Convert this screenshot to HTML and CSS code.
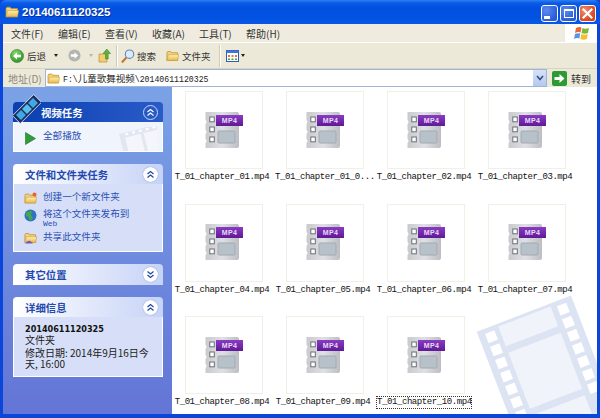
FILE: index.html
```html
<!DOCTYPE html>
<html lang="zh">
<head>
<meta charset="utf-8">
<title>20140611120325</title>
<link rel="stylesheet" href="styles.css">
</head>
<body>
<svg class="defs" width="0" height="0">
  <defs>
    <linearGradient id="fold" x1="0" y1="0" x2="0" y2="1"><stop offset="0" stop-color="#FFF0B0"/><stop offset="1" stop-color="#E8B84E"/></linearGradient>
    <linearGradient id="metal" x1="0" y1="0" x2="1" y2="0"><stop offset="0" stop-color="#C8CACE"/><stop offset=".5" stop-color="#DEE0E3"/><stop offset="1" stop-color="#BCBEC3"/></linearGradient>
    <linearGradient id="purple" x1="0" y1="0" x2="0" y2="1"><stop offset="0" stop-color="#8A3BC4"/><stop offset="1" stop-color="#5F1A96"/></linearGradient>
    <radialGradient id="green" cx=".4" cy=".3" r=".8"><stop offset="0" stop-color="#8EDB6C"/><stop offset="1" stop-color="#1E8A1E"/></radialGradient>
    <symbol id="folder" viewBox="0 0 14 12">
      <path d="M1 2.500 L1.800 1.200 H5.200 L6.200 2.500 H12.500 V10.800 H1 Z" fill="#F6D27A" stroke="#B98E32" stroke-width=".8"/>
      <path d="M1 10.800 L2.600 4.600 H13.600 L12.500 10.800 Z" fill="url(#fold)" stroke="#C79C3E" stroke-width=".6"/>
    </symbol>
    <symbol id="mp4" viewBox="0 0 38 38">
      <path d="M0.500 1 H32 Q34 1 34 3 V35 Q34 37 32 37 H0.500 V32 Q2.500 30 0.500 28 V23 Q2.500 21 0.500 19 V13 Q2.500 11 0.500 9 Z" fill="url(#metal)"/>
      <rect x="4.800" y="6" width="4.500" height="4.800" fill="#fff" stroke="#6C6F76" stroke-width="1"/>
      <rect x="4.800" y="16" width="4.500" height="4.800" fill="#fff" stroke="#6C6F76" stroke-width="1"/>
      <rect x="4.800" y="26" width="4.500" height="4.800" fill="#fff" stroke="#6C6F76" stroke-width="1"/>
      <rect x="13" y="20" width="17" height="12" rx="1" fill="#B7C1CA" stroke="#A4AAB1"/>
      <rect x="11" y="4" width="27" height="11" fill="url(#purple)"/>
      <text x="24.500" y="12" class="mp4-label">MP4</text>
    </symbol>
  </defs>
</svg>
<div class="window">
  <header class="titlebar">
    <svg class="title-icon" width="14" height="12"><use href="#folder"/></svg>
    <span class="title-text">20140611120325</span>
    <div class="caption">
      <span class="cap cap-min"><i class="min-glyph"></i></span>
      <span class="cap cap-max"><i class="max-glyph"></i></span>
      <span class="cap cap-close">
        <svg width="13" height="13" viewBox="0 0 13 13"><path d="M2.500 2.500 L10.500 10.500 M10.500 2.500 L2.500 10.500" stroke="#fff" stroke-width="2.200" stroke-linecap="square"/></svg>
      </span>
    </div>
  </header>
  <div class="frame">
    <nav class="menubar">
      <div class="menus">
        <span>文件(F)</span><span>编辑(E)</span><span>查看(V)</span><span>收藏(A)</span><span>工具(T)</span><span>帮助(H)</span>
      </div>
      <div class="logo">
        <svg width="16" height="15" viewBox="0 0 16 15">
          <path d="M2 2 Q5 0.500 7.500 1.500 L6.500 6.500 Q4 5.500 1 7 Z" fill="#E8683A"/>
          <path d="M8.500 2 Q11.500 3.500 15 2 L14 7 Q10.500 8.500 7.500 7 Z" fill="#7DB83C"/>
          <path d="M1 8 Q3.500 6.700 6.300 7.500 L5.300 12.500 Q2.700 11.500 0 13 Z" fill="#5A94E0"/>
          <path d="M7.300 8 Q10.500 9.500 13.800 8 L12.800 13 Q9.500 14.500 6.300 13 Z" fill="#F5BE2E"/>
        </svg>
      </div>
    </nav>
    <div class="toolbar">
      <div class="tb-group tb-back">
        <svg width="14" height="14" viewBox="0 0 14 14"><circle cx="7" cy="7" r="6.500" fill="url(#green)" stroke="#2C7D2C" stroke-width=".6"/><path d="M3 7 L7 3.500 V5.700 H11 V8.300 H7 V10.500 Z" fill="#fff"/></svg>
        <span class="tb-label">后退</span>
        <i class="drop drop-back"></i>
      </div>
      <svg class="tb-forward" width="13" height="13" viewBox="0 0 14 14"><circle cx="7" cy="7" r="6.500" fill="#B4B4B0"/><path d="M11 7 L7 3.500 V5.700 H3 V8.300 H7 V10.500 Z" fill="#fff"/></svg>
      <i class="drop drop-faint"></i>
      <svg class="tb-up" width="13" height="15" viewBox="0 0 13 15"><path d="M1 6 H9 V14 H1 Z" fill="#F3CF6F" stroke="#B98E32" stroke-width=".7"/><path d="M7.500 11 V5.500 H5 L8.800 1 L12.500 5.500 H10.200 V11 Z" fill="#5FB338" stroke="#2F7D20" stroke-width=".5"/></svg>
      <i class="tb-sep tb-sep-a"></i>
      <svg class="tb-search" width="14" height="14" viewBox="0 0 14 14"><path d="M5 9 L1.500 12.800" stroke="#C9772E" stroke-width="2.200" stroke-linecap="round"/><circle cx="8.500" cy="5.200" r="4.200" fill="#DCEBFA" stroke="#5B86BE" stroke-width="1.100"/></svg>
      <span class="tb-label tb-search-label">搜索</span>
      <svg class="tb-folder" width="13" height="12"><use href="#folder"/></svg>
      <span class="tb-label">文件夹</span>
      <i class="tb-sep tb-sep-b"></i>
      <svg class="tb-view" width="13" height="12" viewBox="0 0 13 12"><rect x=".5" y=".5" width="12" height="11" fill="#fff" stroke="#2E5FB8"/><rect x=".5" y=".5" width="12" height="2.500" fill="#3F78D8"/><path d="M2 5 H4 V7 H2 Z M5.500 5 H7.500 V7 H5.500 Z M9 5 H11 V7 H9 Z" fill="#E27B3A"/><path d="M2 8.500 H4 V10 H2 Z M5.500 8.500 H7.500 V10 H5.500 Z M9 8.500 H11 V10 H9 Z" fill="#4F9E44"/></svg>
      <i class="drop drop-view"></i>
    </div>
    <div class="addressbar">
      <span class="addr-label">地址(D)</span>
      <div class="addr-input">
        <svg width="13" height="11"><use href="#folder"/></svg>
        <span class="addr-path"><span class="mono">F:\</span>儿童歌舞视频<span class="mono">\20140611120325</span></span>
        <span class="addr-drop">
          <svg width="8" height="6" viewBox="0 0 8 6"><path d="M1 1 L4 4.500 L7 1" fill="none" stroke="#3A4F80" stroke-width="1.600"/></svg>
        </span>
      </div>
      <svg class="go-icon" width="15" height="15" viewBox="0 0 15 15"><rect width="15" height="15" rx="2" fill="#2E9A34"/><path d="M2.500 6 H7.500 V3 L12.500 7.500 L7.500 12 V9 H2.500 Z" fill="#fff"/></svg>
      <span class="go-label">转到</span>
    </div>
    <div class="main">
      <aside class="sidebar">
        <section class="panel panel-primary">
          <svg class="film-badge" width="28" height="30" viewBox="0 0 28 30">
            <g transform="rotate(-45 14 15)"><rect x="-1" y="9.500" width="30" height="11" fill="#1E2E5C" stroke="#E8F0FF" stroke-width=".8"/><rect x="2" y="11.500" width="7" height="7" fill="#3FA9E8"/><rect x="10.500" y="11.500" width="7" height="7" fill="#55C0F0"/><rect x="19" y="11.500" width="7" height="7" fill="#3FA9E8"/></g>
          </svg>
          <div class="panel-head head-primary">
            <span class="head-title">视频任务</span>
            <span class="chev chev-primary">
              <svg width="9" height="9" viewBox="0 0 9 9"><path d="M1.500 4 L4.500 1.500 L7.500 4 M1.500 7.500 L4.500 5 L7.500 7.500" fill="none" stroke="#fff" stroke-width="1.200"/></svg>
            </span>
          </div>
          <div class="panel-body body-video">
            <svg class="body-film" width="40" height="26" viewBox="0 0 40 26">
              <g transform="translate(2 7) rotate(-14)">
                <rect width="44" height="30" fill="#E2E6F2"/>
                <rect x="5" y="5" width="16" height="26" fill="#F4F6FB"/>
                <rect x="24" y="5" width="16" height="26" fill="#F4F6FB"/>
                <path d="M6 1 h3 v2 h-3 Z M13 1 h3 v2 h-3 Z M20 1 h3 v2 h-3 Z M27 1 h3 v2 h-3 Z M34 1 h3 v2 h-3 Z" fill="#fff"/>
              </g>
            </svg>
            <div class="task">
              <svg width="11" height="13" viewBox="0 0 11 13"><path d="M.5 .5 L10.500 6.500 L.5 12.500 Z" fill="#2F9C3A" stroke="#1C6E28" stroke-width=".6"/></svg>
              <a>全部播放</a>
            </div>
          </div>
        </section>
        <section class="panel">
          <div class="panel-head">
            <span class="head-title">文件和文件夹任务</span>
            <span class="chev">
              <svg width="9" height="9" viewBox="0 0 9 9"><path d="M1.500 4 L4.500 1.500 L7.500 4 M1.500 7.500 L4.500 5 L7.500 7.500" fill="none" stroke="#2146A8" stroke-width="1.200"/></svg>
            </span>
          </div>
          <div class="panel-body body-tasks">
            <div class="task-line">
              <svg width="13" height="13" viewBox="0 0 13 13"><use href="#folder"/><circle cx="10.500" cy="2.500" r="2" fill="#E9622B"/></svg>
              <a>创建一个新文件夹</a>
            </div>
            <div class="task-line task-wrap">
              <svg width="13" height="13" viewBox="0 0 13 13"><circle cx="6.500" cy="6.500" r="6" fill="#2F72C8"/><path d="M2 4 Q5 1 8 2.500 L7 6 L9 9 L6 12 L4.500 8 L2 7 Z" fill="#42A848"/></svg>
              <a>将这个文件夹发布到<br><span class="latin">Web</span></a>
            </div>
            <div class="task-line">
              <svg width="13" height="12" viewBox="0 0 13 12"><use href="#folder"/><path d="M1 11.500 Q4 7.500 7 9.500 L9 11.500 Z" fill="#7A5AA8"/></svg>
              <a>共享此文件夹</a>
            </div>
          </div>
        </section>
        <section class="panel">
          <div class="panel-head head-closed">
            <span class="head-title">其它位置</span>
            <span class="chev">
              <svg width="9" height="9" viewBox="0 0 9 9"><path d="M1.500 1.500 L4.500 4 L7.500 1.500 M1.500 5 L4.500 7.500 L7.500 5" fill="none" stroke="#2146A8" stroke-width="1.200"/></svg>
            </span>
          </div>
        </section>
        <section class="panel">
          <div class="panel-head">
            <span class="head-title">详细信息</span>
            <span class="chev">
              <svg width="9" height="9" viewBox="0 0 9 9"><path d="M1.500 4 L4.500 1.500 L7.500 4 M1.500 7.500 L4.500 5 L7.500 7.500" fill="none" stroke="#2146A8" stroke-width="1.200"/></svg>
            </span>
          </div>
          <div class="panel-body body-details">
            <div class="detail-name">20140611120325</div>
            <div>文件夹</div>
            <div class="detail-date">修改日期: 2014年9月16日今天, 16:00</div>
          </div>
        </section>
      </aside>
      <div class="content">
        <svg class="watermark" width="125" height="120" viewBox="0 0 125 120">
          <g transform="translate(4.700 37.700) rotate(-21)">
            <rect x="0" y="0" width="101" height="190" fill="#DCE3F2"/>
            <g fill="#F0F3FA">
              <rect x="22" y="3" width="56" height="21"/><rect x="22" y="31" width="56" height="60"/><rect x="22" y="98" width="56" height="60"/>
            </g>
            <g fill="#fff">
              <rect x="7" y="5" width="10" height="10"/><rect x="7" y="19" width="10" height="10"/><rect x="7" y="33" width="10" height="10"/><rect x="7" y="47" width="10" height="10"/><rect x="7" y="61" width="10" height="10"/><rect x="7" y="75" width="10" height="10"/><rect x="7" y="89" width="10" height="10"/>
              <rect x="84" y="5" width="10" height="10"/><rect x="84" y="19" width="10" height="10"/><rect x="84" y="33" width="10" height="10"/><rect x="84" y="47" width="10" height="10"/><rect x="84" y="61" width="10" height="10"/><rect x="84" y="75" width="10" height="10"/><rect x="84" y="89" width="10" height="10"/>
            </g>
          </g>
        </svg>
        <div class="grid">
          <figure class="item"><div class="thumb"><svg width="38" height="38"><use href="#mp4"/></svg></div><figcaption>T_01_chapter_01.mp4</figcaption></figure>
          <figure class="item"><div class="thumb"><svg width="38" height="38"><use href="#mp4"/></svg></div><figcaption>T_01_chapter_01_0...</figcaption></figure>
          <figure class="item"><div class="thumb"><svg width="38" height="38"><use href="#mp4"/></svg></div><figcaption>T_01_chapter_02.mp4</figcaption></figure>
          <figure class="item"><div class="thumb"><svg width="38" height="38"><use href="#mp4"/></svg></div><figcaption>T_01_chapter_03.mp4</figcaption></figure>
          <figure class="item"><div class="thumb"><svg width="38" height="38"><use href="#mp4"/></svg></div><figcaption>T_01_chapter_04.mp4</figcaption></figure>
          <figure class="item"><div class="thumb"><svg width="38" height="38"><use href="#mp4"/></svg></div><figcaption>T_01_chapter_05.mp4</figcaption></figure>
          <figure class="item"><div class="thumb"><svg width="38" height="38"><use href="#mp4"/></svg></div><figcaption>T_01_chapter_06.mp4</figcaption></figure>
          <figure class="item"><div class="thumb"><svg width="38" height="38"><use href="#mp4"/></svg></div><figcaption>T_01_chapter_07.mp4</figcaption></figure>
          <figure class="item"><div class="thumb"><svg width="38" height="38"><use href="#mp4"/></svg></div><figcaption>T_01_chapter_08.mp4</figcaption></figure>
          <figure class="item"><div class="thumb"><svg width="38" height="38"><use href="#mp4"/></svg></div><figcaption>T_01_chapter_09.mp4</figcaption></figure>
          <figure class="item"><div class="thumb"><svg width="38" height="38"><use href="#mp4"/></svg></div><figcaption class="focused">T_01_chapter_10.mp4</figcaption></figure>
        </div>
      </div>
    </div>
  </div>
</div>
</body>
</html>
```
FILE: styles.css
```css
* { box-sizing: border-box; }
html, body { margin: 0; padding: 0; width: 600px; height: 418px; overflow: hidden; }
body { font-family: "Noto Sans CJK SC", "Liberation Sans", sans-serif; font-size: 10px; color: #222; background: #0A3ED0; }
.defs { position: absolute; }
.mp4-label { font: bold 7px "Liberation Sans", sans-serif; letter-spacing: .3px; fill: #E9DCF5; text-anchor: middle; }
.mono { font: 8.200px "Liberation Mono", monospace; }

.window { width: 600px; height: 418px; display: flex; flex-direction: column; background: #0B46DA; }
.titlebar {
  height: 24px; flex: none; display: flex; align-items: center; padding: 0 4px 0 5px;
  background: linear-gradient(#2F7FF0 0, #0A5CE8 3px, #0250DE 8px, #0353E3 18px, #0A58E4 24px);
  border-radius: 6px 6px 0 0;
}
.title-icon { flex: none; }
.title-text { margin-left: 3px; font: bold 11.500px "Liberation Sans", sans-serif; color: #fff; text-shadow: 1px 1px 0 #0A2E9C; }
.caption { margin-left: auto; display: flex; gap: 2px; margin-top: 3px; }
.cap { width: 17px; height: 17px; border: 1px solid #fff; border-radius: 3px; display: flex; align-items: center; justify-content: center; background: radial-gradient(circle at 30% 30%, #5C8CF0, #2A5BD8 75%); }
.cap-close { background: radial-gradient(circle at 30% 30%, #F08A6A, #D8431E 75%); }
.min-glyph { width: 6px; height: 3px; background: #fff; margin: 8px 5px 0 0; }
.max-glyph { width: 10px; height: 9px; border: 1px solid #fff; border-top-width: 2px; }

.frame { flex: 1; min-height: 0; margin: 0 3px 4px; display: flex; flex-direction: column; background: #ECE9D8; }
.menubar { height: 19px; flex: none; display: flex; justify-content: space-between; background: #EFECDF; border-bottom: 1px solid #fff; }
.menus { display: flex; gap: 14px; padding: 1px 0 0 8px; line-height: 17px; color: #333; }
.menus span { width: 33px; white-space: nowrap; }
.logo { width: 32px; height: 19px; background: #fff; display: flex; align-items: center; justify-content: center; padding-left: 1px; }

.toolbar { height: 26px; flex: none; display: flex; align-items: center; padding: 0 0 0 7px; background: #EDE9D9; border-bottom: 1px solid #D8D4C2; }
.tb-group { display: flex; align-items: center; }
.tb-label { color: #333; white-space: nowrap; font-size: 9.500px; }
.tb-back .tb-label { margin-left: 3px; }
.drop { width: 0; height: 0; border-left: 2.500px solid transparent; border-right: 2.500px solid transparent; border-top: 3px solid #222; }
.drop-back { margin-left: 8px; }
.tb-forward { margin-left: 10px; }
.drop-faint { margin-left: 8px; border-top-color: #B8B6AA; }
.tb-up { margin-left: 5px; }
.tb-sep { width: 1px; height: 22px; background: #CFCBB8; box-shadow: 1px 0 0 #fff; }
.tb-sep-a { margin-left: 5px; }
.tb-search { margin-left: 4px; }
.tb-search-label { margin-left: 2px; }
.tb-folder { margin: 0 3px 0 10px; }
.tb-sep-b { margin-left: 8px; }
.tb-view { margin-left: 6px; }
.drop-view { margin-left: 2px; }

.addressbar { height: 18px; flex: none; display: flex; align-items: center; background: #EDE9D9; }
.addr-label { margin-left: 5px; width: 37px; color: #8A887C; white-space: nowrap; }
.addr-input { width: 502px; height: 18px; display: flex; align-items: center; background: #fff; border: 1px solid #9FB4D8; padding-left: 1px; }
.addr-path { margin-left: 3px; font-size: 9.500px; color: #222; white-space: nowrap; }
.addr-drop { margin-left: auto; width: 13px; height: 16px; background: linear-gradient(#D6E2F8, #B4C8EE); display: flex; align-items: center; justify-content: center; }
.go-icon { margin-left: 5px; flex: none; }
.go-label { margin-left: 4px; color: #333; white-space: nowrap; }

.main { flex: 1; min-height: 0; display: flex; }
.sidebar { width: 169px; flex: none; padding: 15px 9px 0 10px; display: flex; flex-direction: column; gap: 12px; background: linear-gradient(#7BA2E7, #6375D6); }
.panel { position: relative; }
.film-badge { position: absolute; left: 0; top: -8px; z-index: 1; }
.panel-head { height: 20px; display: flex; align-items: center; justify-content: space-between; padding: 0 5px 0 12px; border-radius: 4px 4px 0 0; background: linear-gradient(90deg, #fff, #C6D3F7); }
.head-closed { height: 21px; }
.head-title { font-weight: 700; color: #2349AE; font-size: 10.400px; white-space: nowrap; }
.head-primary { background: linear-gradient(90deg, #0A3FB0, #2A5CC8); padding-left: 28px; }
.head-primary .head-title { color: #fff; }
.chev { width: 15px; height: 15px; border-radius: 50%; background: #fff; display: flex; align-items: center; justify-content: center; box-shadow: 0 0 1px #5070C0; }
.chev-primary { background: transparent; border: 1px solid #C8D6F6; box-shadow: none; }
.panel-body { background: #D6DFF7; border: 1px solid #fff; border-top: 0; }
.body-video { height: 30px; background: #F0F4FD; position: relative; overflow: hidden; padding: 0 0 0 11px; }
.body-film { position: absolute; right: 5px; top: 5px; }
.task { position: relative; display: flex; align-items: flex-start; gap: 7px; padding-top: 10px; }
a { color: #2A4FB4; white-space: nowrap; font-size: 9.600px; }
.task a { line-height: 12px; margin-top: -3px; }
.body-tasks { height: 68px; padding: 6px 0 0 10px; display: flex; flex-direction: column; gap: 1.500px; }
.task-line { display: flex; align-items: flex-start; gap: 6px; line-height: 13px; }
.task-line svg { flex: none; margin-top: 2px; }
.task-wrap { line-height: 12px; }
.latin { font: 8px "Liberation Mono", monospace; display: block; line-height: 10px; }
.body-details { height: 60px; padding: 7px 10px 0 11px; line-height: 10px; color: #222; font-size: 10px; }
.detail-name { font: bold 8.100px "DejaVu Sans", sans-serif; color: #111; line-height: 11px; }
.detail-date { margin-top: 2px; line-height: 11px; }

.content { flex: 1; min-width: 0; background: #fff; position: relative; overflow: hidden; padding: 4px 0 0 13px; }
.watermark { position: absolute; right: 0; bottom: 0; }
.grid { position: relative; display: grid; grid-template-columns: repeat(4, 101px); grid-auto-rows: 112.500px; }
.item { margin: 0; width: 101px; position: relative; }
.thumb { width: 78px; height: 78px; border: 1px solid #F1F0E6; background: #fff; display: flex; align-items: center; justify-content: center; padding-bottom: 1px; }
figcaption { position: absolute; left: -11px; top: 80px; width: 96px; height: 13px; text-align: center; font: 9px/13px "Liberation Mono", monospace; letter-spacing: -.42px; color: #111; white-space: nowrap; }
.focused { border: 1px dotted #333; line-height: 11px; }
```
